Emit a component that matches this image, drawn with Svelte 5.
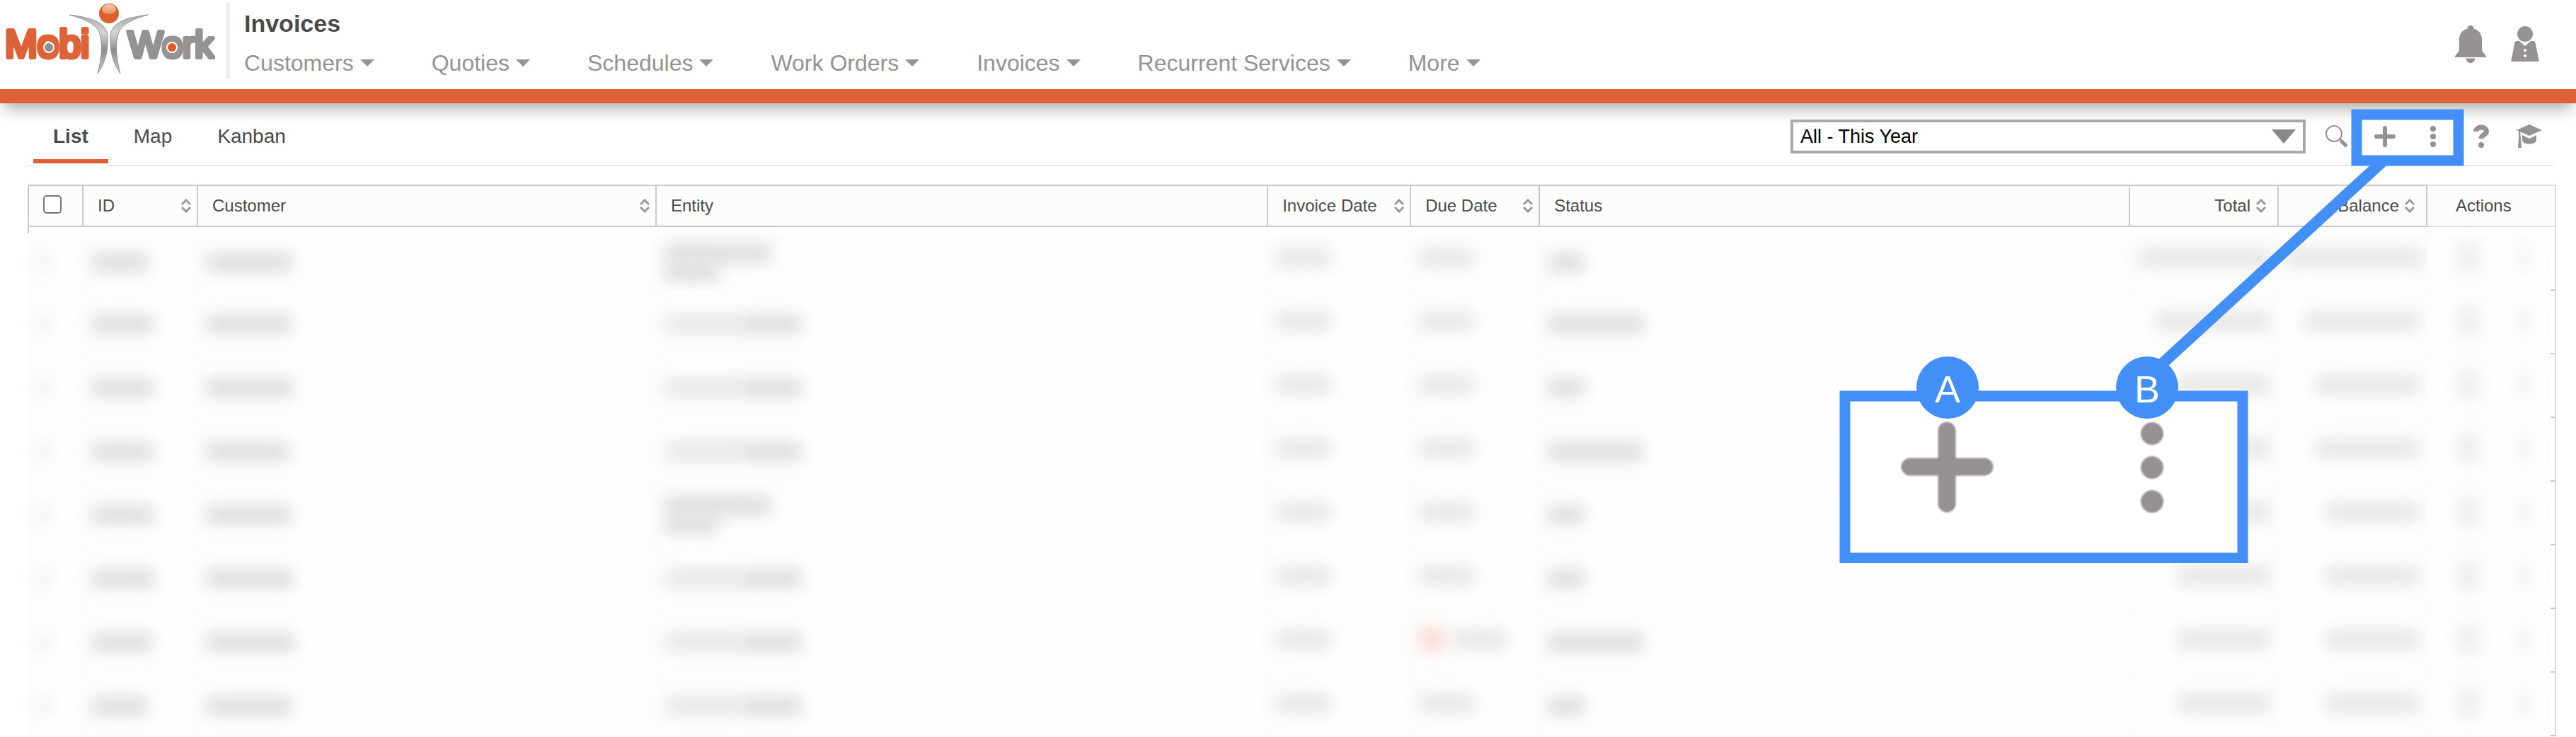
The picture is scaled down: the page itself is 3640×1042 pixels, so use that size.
<script>
    const menu = ["Customers", "Quoties", "Schedules", "Work Orders", "Invoices", "Recurrent Services", "More"];
    const tabs = ["List", "Map", "Kanban"];

    const columns = [
        { name: "ID", key: "id", sortable: true },
        { name: "Customer", key: "customer", sortable: true },
        { name: "Entity", key: "entity" },
        { name: "Invoice Date", key: "invoiced", sortable: true },
        { name: "Due Date", key: "due", sortable: true },
        { name: "Status", key: "status" },
        { name: "Total", key: "total", sortable: true },
        { name: "Balance", key: "balance", sortable: true },
        { name: "Actions", key: "actions" }
    ];

    // widths of the obscured values, in pixels
    const rows = [
        { id: 80, customer: 122, stacked: true, status: 50, total: 188, balance: 192 },
        { id: 86, customer: 120, entity: 84, status: 134, total: 162, balance: 162 },
        { id: 86, customer: 122, entity: 84, status: 50, total: 132, balance: 146 },
        { id: 86, customer: 116, entity: 84, status: 134, total: 132, balance: 146 },
        { id: 86, customer: 120, stacked: true, status: 50, total: 132, balance: 132 },
        { id: 88, customer: 122, entity: 84, status: 50, total: 132, balance: 132 },
        { id: 84, customer: 124, entity: 84, overdue: true, status: 134, total: 132, balance: 132 },
        { id: 78, customer: 120, entity: 84, status: 50, total: 132, balance: 132 }
    ];

    let activeTab = "List";
    let allChecked = false;
</script>

<svelte:head>
    <title>Invoices</title>
</svelte:head>

<div class="page">
    <header>
        <a class="logo" href="/" aria-label="MobiWork">
            <svg viewBox="0 0 304 112" width="304" height="112">
                <defs>
                    <linearGradient id="shine" x1="0" y1="0" x2="0" y2="1">
                        <stop offset="0" stop-color="#f6cdb4" />
                        <stop offset="1" stop-color="#e58a5c" />
                    </linearGradient>
                    <linearGradient id="arm" x1="0" y1="0" x2="0" y2="1">
                        <stop offset="0" stop-color="#a9abac" />
                        <stop offset="0.3" stop-color="#d3d5d6" />
                        <stop offset="0.6" stop-color="#8b8d8f" />
                        <stop offset="1" stop-color="#d0d2d3" />
                    </linearGradient>
                </defs>
                <text class="mobi" x="7" y="81">Mobi</text>
                <text class="work" x="181" y="81">Work</text>
                <circle cx="69" cy="67" r="8" fill="#fff" />
                <circle cx="69" cy="67" r="6" fill="#8f8f8f" />
                <circle cx="243" cy="67" r="8" fill="#fff" />
                <circle cx="243" cy="67" r="6" fill="#e05a26" />
                <path d="M98 21C132 25 150 33 152 50C153 72 149 88 138 104C144 82 145 62 141 48C138 36 122 27 98 21Z" fill="url(#arm)" stroke="#8f9193" stroke-width="1" />
                <path d="M209 21C175 25 158 33 156 50C155 72 159 88 170 104C164 82 163 62 167 48C170 36 186 27 209 21Z" fill="url(#arm)" stroke="#8f9193" stroke-width="1" />
                <circle cx="154" cy="19" r="14" fill="#de5f2c" />
                <ellipse cx="154" cy="13" rx="10" ry="7" fill="url(#shine)" />
            </svg>
        </a>
        <div class="heading">
            <h1>Invoices</h1>
            <nav>
                {#each menu as item}
                    <button type="button">
                        {item}
                        <svg viewBox="0 0 20 10" width="20" height="10"><path d="M0 0H20L10 10Z" fill="currentColor" /></svg>
                    </button>
                {/each}
            </nav>
        </div>
        <div class="account">
            <button type="button" aria-label="Notifications">
                <svg viewBox="0 0 46 54" width="46" height="54" fill="currentColor">
                    <path d="M23 0C20 0 18.800 2 18.500 4.500C11 6.500 7 12 7 20V33C7 38 2 40 0.500 45H45.500C44 40 39 38 39 33V20C39 12 35 6.500 27.500 4.500C27.200 2 26 0 23 0Z" />
                    <path d="M16.500 46.500H29.500C29 50.500 26.500 53 23 53S17 50.500 16.500 46.500Z" />
                </svg>
            </button>
            <button type="button" aria-label="Profile">
                <svg viewBox="0 0 40 54" width="40" height="54" fill="currentColor">
                    <circle cx="20" cy="12" r="11" />
                    <path d="M8 22H12L20 29L28 22H32Q34 22 34.500 24L39.500 49Q40 51 38 51H2Q0 51 0.500 49L5.500 24Q6 22 8 22Z" />
                    <circle cx="20" cy="35" r="2" fill="#fff" />
                    <circle cx="20" cy="43" r="2" fill="#fff" />
                </svg>
            </button>
        </div>
    </header>

    <div class="toolbar">
        <div class="tabs" role="tablist">
            {#each tabs as tab}
                <button type="button" role="tab" aria-selected={tab === activeTab} class:active={tab === activeTab} on:click={() => (activeTab = tab)}>{tab}</button>
            {/each}
        </div>
        <div class="filter">
            <select aria-label="Filter">
                <option>All - This Year</option>
            </select>
            <svg viewBox="0 0 34 20" width="34" height="20"><path d="M0 0H34L17 20Z" fill="#888" /></svg>
        </div>
        <div class="tools">
            <button type="button" aria-label="Search">
                <svg viewBox="0 0 34 34" width="34" height="34" fill="none" stroke="currentColor">
                    <circle cx="13" cy="13" r="11" stroke-width="2" />
                    <path d="M21 21L24 24" stroke-width="2" />
                    <path d="M22.500 22.500L31 31" stroke-width="5" />
                </svg>
            </button>
            <button type="button" aria-label="Add">
                <svg viewBox="0 0 34 34" width="34" height="34" fill="none" stroke="currentColor" stroke-width="6" stroke-linecap="round">
                    <path d="M17 5V29M5 17H29" />
                </svg>
            </button>
            <button type="button" aria-label="More options">
                <svg viewBox="0 0 34 34" width="34" height="34" fill="currentColor">
                    <circle cx="17" cy="6" r="4" /><circle cx="17" cy="17" r="4" /><circle cx="17" cy="28" r="4" />
                </svg>
            </button>
            <button type="button" aria-label="Help">
                <svg viewBox="0 0 34 34" width="34" height="34">
                    <path d="M9.500 10C9.500 2 24.500 2 24.500 10C24.500 15 17 14 17 20" fill="none" stroke="currentColor" stroke-width="7" />
                    <circle cx="17" cy="29" r="4" fill="currentColor" />
                </svg>
            </button>
            <button type="button" aria-label="Training">
                <svg viewBox="0 0 36 34" width="36" height="34" fill="currentColor">
                    <path d="M18 0L36 8L18 16L0 8Z" />
                    <path d="M8 15L18 20L28 15V23C26 29 10 29 8 23Z" />
                    <path d="M3 9H5L6 20L7 33H2L3 20Z" />
                </svg>
            </button>
        </div>
    </div>

    <table>
        <colgroup>
            <col class="check" />
            {#each columns as { key }}
                <col class={key} />
            {/each}
        </colgroup>
        <thead>
            <tr>
                <th><input type="checkbox" aria-label="Select all" bind:checked={allChecked} /></th>
                {#each columns as { name, key, sortable }}
                    <th class={key}>
                        <div class="head">
                            {name}
                            {#if sortable}
                                <button type="button" aria-label="Sort by {name}">
                                    <svg viewBox="0 0 14 20" width="14" height="20" fill="none" stroke="#999" stroke-width="3">
                                        <path d="M1 8L7 2L13 8M1 12L7 18L13 12" />
                                    </svg>
                                </button>
                            {/if}
                        </div>
                    </th>
                {/each}
            </tr>
        </thead>
        <tbody>
            {#each rows as row}
                <tr>
                    <td><span class="smudge box"></span></td>
                    <td><span class="smudge" style="width: {row.id}px"></span></td>
                    <td><span class="smudge" style="width: {row.customer}px"></span></td>
                    <td>
                        {#if row.stacked}
                            <span class="smudge name"></span>
                            <span class="smudge second"></span>
                        {:else}
                            <span class="smudge soft first"></span><span class="smudge" style="width: {row.entity}px"></span>
                        {/if}
                    </td>
                    <td class="date"><span class="smudge soft day"></span></td>
                    <td class="date">
                        {#if row.overdue}<span class="smudge alert"></span>{/if}
                        <span class="smudge soft day"></span>
                    </td>
                    <td><span class="smudge" style="width: {row.status}px"></span></td>
                    <td class="date amount"><span class="smudge soft" style="width: {row.total}px"></span></td>
                    <td class="date amount"><span class="smudge soft" style="width: {row.balance}px"></span></td>
                    <td class="date action"><span class="smudge doc"></span><span class="smudge dots"></span></td>
                </tr>
            {/each}
        </tbody>
    </table>

    <!-- callout that enlarges the two highlighted buttons -->
    <svg class="callout" viewBox="0 0 883 642" width="883" height="642">
        <path d="M768 74L451 365" stroke="#428ff7" stroke-width="16" />
        <rect x="731" y="8" width="144" height="65" fill="none" stroke="#428ff7" stroke-width="15" />
        <rect x="8" y="406" width="562" height="229" fill="#fff" stroke="#428ff7" stroke-width="15" />
        <g class="enlarged">
            <path d="M152 455V558M100 506H205" fill="none" stroke="#969293" stroke-width="25" stroke-linecap="round" />
            <g fill="#969293">
                <circle cx="442" cy="459" r="16" /><circle cx="442" cy="507" r="16" /><circle cx="442" cy="555" r="16" />
            </g>
        </g>
        <circle cx="153" cy="394" r="44" fill="#428ff7" />
        <circle cx="435" cy="394" r="44" fill="#428ff7" />
        <text x="153" y="415">A</text>
        <text x="435" y="415">B</text>
    </svg>
</div>

<style>
    :global(body) {
        background: #fff;
        font-family: "Liberation Sans", Arial, sans-serif;
        color: #4a4a4a;
    }

    .page {
        position: relative;
        overflow: hidden;
    }

    button {
        padding: 0;
        border: 0;
        background: none;
        font: inherit;
        color: #969293;
        cursor: pointer;
    }

    svg {
        display: block;
    }

    header {
        display: flex;
        padding-bottom: 14px;
        border-bottom: 20px solid #de6237;
        box-shadow: 0 14px 20px -6px rgba(0, 0, 0, 0.32);
    }

    .logo {
        margin-right: 15px;
    }

    .logo text {
        stroke-width: 6px;
        stroke-linejoin: round;
    }

    .mobi {
        font-size: 55px;
        fill: #de6237;
        stroke: #de6237;
    }

    .work {
        font-size: 52px;
        fill: #959292;
        stroke: #959292;
    }

    .heading {
        flex: 1;
        margin-top: 4px;
        padding: 9px 0 3px 20px;
        border-left: 6px solid #efefef;
    }

    h1 {
        margin: 0 0 16px;
        font-size: 34px;
        line-height: 40px;
    }

    nav {
        display: flex;
        gap: 81px;
    }

    nav button {
        display: flex;
        align-items: center;
        gap: 9px;
        font-size: 32px;
        line-height: 40px;
        white-space: nowrap;
    }

    .account {
        display: flex;
        align-items: flex-start;
        gap: 34px;
        padding: 36px 52px 0 0;
    }

    .toolbar {
        display: flex;
        align-items: flex-end;
        margin: 0 32px 26px 39px;
        padding-top: 23px;
        border-bottom: 2px solid #e8e8e8;
    }

    .tabs {
        display: flex;
        flex: 1;
        gap: 8px;
        margin: 0 0 2px 8px;
    }

    .tabs button {
        padding: 0 28px 12px;
        border-bottom: 6px solid transparent;
        font-size: 28px;
        line-height: 40px;
        color: #4a4a4a;
    }

    .tabs .active {
        border-color: #de6237;
        box-shadow: 0 4px 0 #fff;
        font-weight: bold;
    }

    .filter {
        position: relative;
        width: 20vw;
        margin: 0 10px 16px 0;
    }

    .filter svg {
        position: absolute;
        top: 14px;
        right: 14px;
        pointer-events: none;
    }

    select {
        display: block;
        width: 100%;
        height: 48px;
        padding: 0 60px 0 10px;
        border: 4px solid #a9a9a9;
        border-radius: 0;
        appearance: none;
        background: #fff;
        font: 27px "Liberation Sans", Arial, sans-serif;
        color: #000;
    }

    .tools {
        display: flex;
        margin-bottom: 16px;
    }

    .tools button {
        display: flex;
        align-items: center;
        justify-content: center;
        width: 68px;
        height: 48px;
    }

    table {
        width: calc(100% - 67px);
        margin: 0 28px 0 39px;
        border-spacing: 0;
        table-layout: fixed;
        border-right: 2px solid #ddd;
    }

    col.check { width: 79px; }
    col.id { width: 162px; }
    col.customer { width: 648px; }
    col.entity { width: 24.2%; }
    col.invoiced { width: 202px; }
    col.due { width: 182px; }
    col.total { width: 210px; }
    col.balance { width: 210px; }
    col.actions { width: 180px; }

    th {
        box-sizing: border-box;
        height: 60px;
        padding: 0 8px 0 20px;
        border: solid #c9c9c9;
        border-width: 2px 2px 2px 0;
        background: #fcfcfc;
        font-size: 24px;
        font-weight: normal;
        line-height: 28px;
        text-align: left;
    }

    th:first-child {
        border-left-width: 2px;
    }

    th.actions {
        padding-left: 40px;
        border-color: #ddd;
        border-right: 0;
    }

    .head {
        display: flex;
        align-items: center;
        justify-content: space-between;
    }

    .total .head,
    .balance .head {
        justify-content: flex-end;
        gap: 8px;
        padding-right: 8px;
    }

    input[type='checkbox'] {
        display: block;
        box-sizing: border-box;
        width: 26px;
        height: 26px;
        margin: 0 0 4px;
        border: 2px solid #767676;
        border-radius: 5px;
        appearance: none;
        background: #fff;
    }

    input[type='checkbox']:checked {
        background: #767676;
    }

    td {
        position: relative;
        box-sizing: border-box;
        height: 90px;
        padding: 4px 12px 0;
        background: #fefefe;
        box-shadow: inset 0 0 24px 4px #fcfcfc;
        white-space: nowrap;
        font-size: 0;
    }

    td.date {
        padding: 0 12px 4px;
    }

    td.amount {
        text-align: right;
    }

    td.action {
        padding-left: 42px;
    }

    tr:first-child td {
        padding-top: 0;
        border-top: 9px solid #fff;
    }

    tr:first-child td.date {
        padding-bottom: 12px;
    }

    tr:first-child td:first-child::before {
        content: '';
        position: absolute;
        top: -9px;
        left: 0;
        width: 2px;
        height: 9px;
        background: #c9c9c9;
    }

    /* row marks along the right edge */
    td:last-child::after {
        content: '';
        position: absolute;
        right: 0;
        bottom: 0;
        width: 6px;
        height: 100%;
        box-sizing: border-box;
        border-bottom: 2px solid #c9c9c9;
        background: #fff;
    }

    .smudge {
        display: inline-block;
        height: 26px;
        background: #dcdcdc;
        filter: blur(11px);
        vertical-align: middle;
    }

    .soft { background: #e5e5e5; }
    .day { width: 76px; }
    .first { width: 108px; }
    .name { display: block; width: 150px; }
    .second { display: block; width: 76px; }
    .doc { width: 32px; height: 40px; margin-right: 56px; background: #ededed; }
    .dots { width: 12px; height: 36px; background: #ededed; }
    .box { width: 22px; background: #f2f2f2; }
    .alert { width: 34px; height: 34px; margin-right: 12px; background: #fad8d4; }

    .callout {
        position: absolute;
        top: 154px;
        right: 158px;
        pointer-events: none;
    }

    .callout text {
        font-size: 54px;
        fill: #fff;
        text-anchor: middle;
    }

    .enlarged {
        filter: blur(1px);
    }
</style>
